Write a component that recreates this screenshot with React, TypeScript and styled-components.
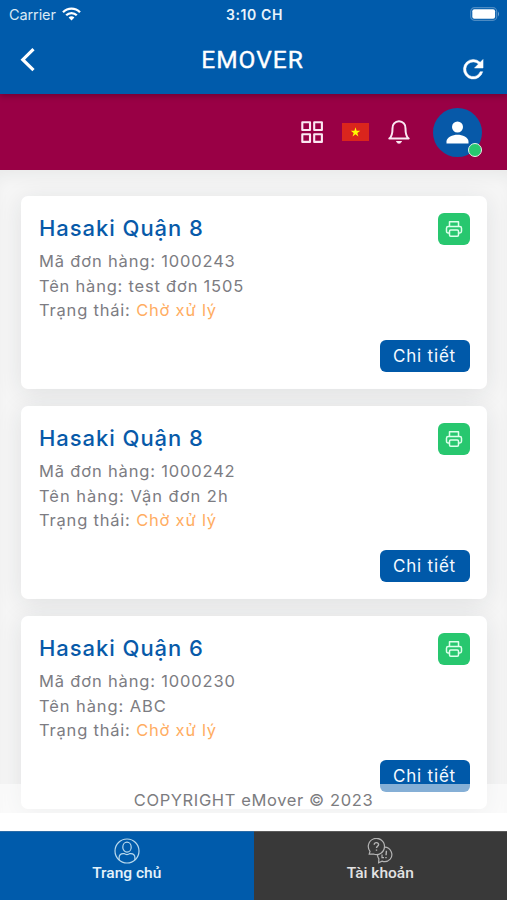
import React from "react";
import styled, { createGlobalStyle } from "styled-components";

const GlobalStyle = createGlobalStyle`
  * { box-sizing: border-box; }
  body { margin: 0; background: #fff; overflow: hidden; }
  svg { display: block; }
  button { border: 0; padding: 0; background: none; color: inherit; font: inherit; }
`;

const Screen = styled.div`
  width: 507px;
  height: 900px;
  display: flex;
  flex-direction: column;
  background: #fff;
  font-family: Inter, "Open Sans", sans-serif;
`;

const Header = styled.header`
  height: 94px;
  flex: none;
  background: #005bab;
  color: #fff;
  position: relative;
  z-index: 1;
  box-shadow: 0 2px 6px rgba(0, 0, 0, 0.28);
`;

const StatusBar = styled.div`
  height: 28px;
  display: grid;
  grid-template-columns: 1fr auto 1fr;
  align-items: center;
  padding: 0 7px 0 9px;
  font-size: 14.5px;
`;

const Carrier = styled.div`
  display: flex;
  align-items: center;
  gap: 6px;
  color: #d9e9f5;
  letter-spacing: -0.1px;
`;

const Clock = styled.span`
  font-weight: 600;
  font-size: 14px;
  letter-spacing: 0.6px;
  color: #e9f4fb;
`;

const BatterySlot = styled.div`
  justify-self: end;
  margin-top: -1px;
`;

const TitleBar = styled.div`
  height: 66px;
  display: grid;
  grid-template-columns: 1fr auto 1fr;
  align-items: start;
  padding: 0 22px 0 20px;
`;

const Title = styled.h1`
  margin: 17px 0 0;
  font: 400 24.5px/30px Roboto, sans-serif;
  letter-spacing: 1px;
  -webkit-text-stroke: 0.35px #fff;
`;

const BackButton = styled.button`
  justify-self: start;
  margin-top: 19px;
`;

const RefreshButton = styled.button`
  justify-self: end;
  margin-top: 29px;
`;

const Toolbar = styled.nav`
  height: 76px;
  flex: none;
  background: #990045;
  color: #fff;
  display: flex;
  align-items: center;
  justify-content: flex-end;
  padding-right: 25.5px;
`;

const ToolIcon = styled.div<{ $gap: number }>`
  margin-right: ${(p) => p.$gap}px;
`;

const Avatar = styled.div`
  width: 49px;
  height: 49px;
  border-radius: 50%;
  background: #0759a8;
  position: relative;
  display: grid;
  place-items: center;
`;

const OnlineDot = styled.i`
  position: absolute;
  right: 0;
  bottom: 0;
  width: 14px;
  height: 14px;
  border-radius: 50%;
  border: 1.4px solid #e6f3ec;
  background: #28c76f;
`;

const Content = styled.main`
  height: 643px;
  flex: none;
  position: relative;
  overflow: hidden;
  background: #f6f6f6;
  padding: 26px 20.5px 0 21px;
  box-shadow: inset 0 12px 18px -8px rgba(34, 41, 47, 0.07);
`;

const CardList = styled.div`
  display: flex;
  flex-direction: column;
  gap: 17px;
`;

const Card = styled.article`
  height: 193px;
  flex: none;
  border-radius: 7px;
  background: #fff;
  box-shadow: 0 4px 26px rgba(34, 41, 47, 0.1);
  padding: 16px 17px 17px 18px;
  display: flex;
  flex-direction: column;
`;

const CardTop = styled.div`
  display: flex;
  justify-content: space-between;
  height: 37px;
`;

const CardTitle = styled.h2`
  margin: 0;
  font-size: 22px;
  font-weight: 450;
  line-height: 32px;
  letter-spacing: 0.95px;
  color: #075aa9;
  white-space: nowrap;
`;

const PrintButton = styled.button`
  width: 32px;
  height: 32px;
  border-radius: 6px;
  background: #28c76f;
  display: grid;
  place-items: center;
  margin-top: 1px;
`;

const Field = styled.p<{ $spacing: number }>`
  margin: 0;
  height: 24.5px;
  line-height: 25px;
  font-size: 16.5px;
  letter-spacing: ${(p) => p.$spacing}px;
  color: #7c7c82;
  white-space: nowrap;
`;

const Pending = styled.span`
  color: #ffad62;
`;

const DetailButton = styled.button`
  width: 90px;
  height: 32px;
  margin-top: auto;
  align-self: flex-end;
  border-radius: 6px;
  background: #0059a9;
  color: #f5faff;
  font-size: 17px;
  letter-spacing: 0.8px;
`;

const Copyright = styled.footer`
  position: absolute;
  left: 0;
  right: 0;
  bottom: 0;
  height: 29px;
  background: rgba(255, 255, 255, 0.52);
  text-align: center;
  font-size: 16.5px;
  line-height: 33px;
  letter-spacing: 0.62px;
  color: #7c7c80;
`;

const TabBar = styled.nav`
  margin-top: auto;
  height: 69px;
  display: grid;
  grid-template-columns: 1fr 1fr;
`;

const Tab = styled.button<{ $active?: boolean }>`
  background: ${(p) => (p.$active ? "#005bab" : "#393939")};
  border-top: 1px solid ${(p) => (p.$active ? "#2b6ca7" : "#5b5b5b")};
  color: ${(p) => (p.$active ? "#e4f2fb" : "#e3e3e3")};
  display: flex;
  flex-direction: column;
  align-items: center;
  padding-top: 6px;
  font: 500 15.5px/18px Roboto, sans-serif;
`;

const TabLabel = styled.span`
  margin-top: 0;
`;

const Wifi = () => (
  <svg width="19" height="14" viewBox="0 0 19 14" fill="none" stroke="#fff" strokeWidth="2.3">
    <path d="M1 5.2C5.8.3 13.2.3 18 5.2M4.2 8.3c3-3 7.6-3 10.6 0" />
    <path d="m9.5 13.4-2.9-3c1.6-1.6 4.2-1.6 5.8 0z" fill="#fff" stroke="none" />
  </svg>
);

const Battery = () => (
  <svg width="30" height="14" viewBox="0 0 30 14">
    <rect x=".7" y=".7" width="26" height="12.6" rx="3.8" fill="none" stroke="#4c8bc3" strokeWidth="1.2" />
    <rect x="2.3" y="2.3" width="22.8" height="9.4" rx="2" fill="#fff" />
    <path d="M28 4.5q2 2.5 0 5z" fill="#72a5d0" />
  </svg>
);

const Back = () => (
  <svg width="16" height="26" viewBox="0 0 16 26" fill="none" stroke="#fff" strokeWidth="3.2">
    <path d="M13.5 2.2 2.8 12.7l10.7 10.5" />
  </svg>
);

const Refresh = () => (
  <svg width="24.5" height="24.5" viewBox="2 2 20 20" fill="#fff" stroke="#fff" strokeWidth=".4">
    <path d="M17.65 6.35A7.96 7.96 0 0 0 12 4a8 8 0 1 0 7.73 10h-2.08A6 6 0 1 1 12 6c1.66 0 3.14.69 4.22 1.78L13 11h7V4z" />
  </svg>
);

const Apps = () => (
  <svg width="24" height="24" viewBox="0 0 24 24" fill="none" stroke="#fbe8f2" strokeWidth="2.1">
    <path d="M2.3 2.3H10V10H2.3zM14.2 2.3h7.7V10h-7.7zM2.3 14.2H10v7.7H2.3zM14.2 14.2h7.7v7.7h-7.7z" strokeLinejoin="round" />
  </svg>
);

const Flag = () => (
  <svg width="27" height="18" viewBox="0 0 27 18">
    <path fill="#da251d" d="M0 0h27v18H0z" />
    <path fill="#ff0" d="m13.5 4.3 1.1 3.5h3.7l-3 2.2 1.1 3.5-2.9-2.2-3 2.2 1.2-3.5-3-2.2h3.7z" />
  </svg>
);

const Bell = () => (
  <svg width="24" height="26" viewBox="0 0 24 26" fill="none" stroke="#fbe8f2" strokeWidth="2" strokeLinejoin="round">
    <path d="M2.3 19.5c2.2-1.4 3.2-3.5 3.2-10A6.6 6.6 0 0 1 12 2.2a6.6 6.6 0 0 1 6.5 7.3c0 6.5 1 8.6 3.2 10z" />
    <path d="M9.5 22.5c.7 2.2 4.3 2.2 5 0z" fill="#fbe8f2" strokeWidth="1" />
  </svg>
);

const Person = () => (
  <svg width="23" height="23" viewBox="0 0 23 23" fill="#fff">
    <circle cx="11.5" cy="6" r="5.5" />
    <path d="M.5 22.5v-2c0-4.2 6.2-6.8 11-6.8s11 2.6 11 6.8v2z" />
  </svg>
);

const Printer = () => (
  <svg width="18" height="18" viewBox="0 0 18 18" fill="none" stroke="#ddffeb" strokeWidth="1.5" strokeLinejoin="round">
    <path d="M4.5 6.5V1.7h9v4.8M4.5 13H3.2q-1.7 0-1.7-1.7V8.2q0-1.7 1.7-1.7h11.6q1.7 0 1.7 1.7v3.1q0 1.7-1.7 1.7h-1.3" />
    <rect x="4.5" y="10" width="9" height="6.3" rx="1.2" />
  </svg>
);

const Home = () => (
  <svg width="26" height="26" viewBox="0 0 26 26" fill="none" stroke="#b8d9ed" strokeWidth="1.2">
    <circle cx="13" cy="13" r="12" />
    <ellipse cx="13" cy="9.2" rx="4.2" ry="5" />
    <path d="M5.1 22v-2.3q0-4.1 4.1-4.1h.9q2.9 2 5.8 0h.9q4.1 0 4.1 4.1V22" />
  </svg>
);

const Support = () => (
  <svg width="26" height="26" viewBox="0 0 26 26" fill="none" stroke="#b4b4b4" strokeWidth="1.2">
    <path d="M2.2 16.2 3 13.4A8.1 8.1 0 1 1 6.5 16z" />
    <path d="M17.6 9.2a7.4 7.4 0 0 1 5.6 12 7.6 7.6 0 0 1-8.2 1.9l-3.4 1.6.3-3.8a8 8 0 0 1-1.4-4.8" />
    <path d="M7.2 6.7c.1-2.8 4.6-2.6 4.4-.1-.1 1.7-2.1 1.6-2.1 3.4m0 1.6v1.1M19.4 12.8l-.3 4.5M19 19v1.2" strokeWidth="1.4" />
    <path d="M15 16.5v3.2h2" />
  </svg>
);

interface Order {
  place: string;
  code: string;
  item: string;
  itemSpacing: number;
}

const orders: Order[] = [
  { place: "Hasaki Quận 8", code: "1000243", item: "test đơn 1505", itemSpacing: 0.79 },
  { place: "Hasaki Quận 8", code: "1000242", item: "Vận đơn 2h", itemSpacing: 0.98 },
  { place: "Hasaki Quận 6", code: "1000230", item: "ABC", itemSpacing: 0.9 },
];

const OrderCard = ({ order }: { order: Order }) => (
  <Card>
    <CardTop>
      <CardTitle>{order.place}</CardTitle>
      <PrintButton aria-label="In"><Printer /></PrintButton>
    </CardTop>
    <Field $spacing={0.83}>Mã đơn hàng: {order.code}</Field>
    <Field $spacing={order.itemSpacing}>Tên hàng: {order.item}</Field>
    <Field $spacing={0.8}>Trạng thái: <Pending>Chờ xử lý</Pending></Field>
    <DetailButton>Chi tiết</DetailButton>
  </Card>
);

export default function App() {
  return (
    <Screen>
      <GlobalStyle />
      <Header>
        <StatusBar>
          <Carrier>Carrier <Wifi /></Carrier>
          <Clock>3:10 CH</Clock>
          <BatterySlot><Battery /></BatterySlot>
        </StatusBar>
        <TitleBar>
          <BackButton><Back /></BackButton>
          <Title>EMOVER</Title>
          <RefreshButton><Refresh /></RefreshButton>
        </TitleBar>
      </Header>
      <Toolbar>
        <ToolIcon $gap={18}><Apps /></ToolIcon>
        <ToolIcon $gap={18}><Flag /></ToolIcon>
        <ToolIcon $gap={21.5}><Bell /></ToolIcon>
        <Avatar><Person /><OnlineDot /></Avatar>
      </Toolbar>
      <Content>
        <CardList>
          {orders.map((order) => <OrderCard key={order.code} order={order} />)}
        </CardList>
        <Copyright>COPYRIGHT eMover © 2023</Copyright>
      </Content>
      <TabBar>
        <Tab $active><Home /><TabLabel>Trang chủ</TabLabel></Tab>
        <Tab><Support /><TabLabel>Tài khoản</TabLabel></Tab>
      </TabBar>
    </Screen>
  );
}
